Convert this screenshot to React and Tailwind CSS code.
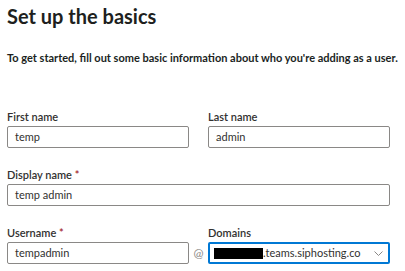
import React from "react";

const font = { fontFamily: 'Lato, "Noto Sans", sans-serif' };

const Field = ({ label, required, value, className = "" }) => (
  <div className={`flex flex-col ${className}`}>
    <label className="text-[11px] leading-[16px] font-semibold text-[#323130] mb-[1px]">
      {label}
      {required && <span className="text-[#a4262c]"> *</span>}
    </label>
    <div className="h-[22px] border border-[#8a8886] rounded-[2px] flex items-center px-[7px] text-[11px] text-[#323130]">
      {value}
    </div>
  </div>
);

export default function App() {
  return (
    <div className="w-[405px] h-[271px] bg-white overflow-hidden pl-[7px] pt-[1px]" style={font}>
      <h1 className="text-[20px] leading-[30px] font-bold text-[#201f1e]">Set up the basics</h1>

      <p className="mt-[19px] text-[11px] leading-[16px] font-bold whitespace-nowrap text-[#201f1e]">
        To get started, fill out some basic information about who you're adding as a user.
      </p>

      <div className="mt-[43px] flex gap-[19px] w-[383px]">
        <Field label="First name" value="temp" className="w-[182px]" />
        <Field label="Last name" value="admin" className="w-[182px]" />
      </div>

      <Field label="Display name" required value="temp admin" className="w-[383px] mt-[19px]" />

      <div className="mt-[19px] flex items-end w-[383px]">
        <Field label="Username" required value="tempadmin" className="w-[182px]" />
        <div className="w-[19px] h-[22px] flex items-center justify-center text-[12px] text-[#8a8886]">@</div>
        <div className="w-[182px] flex flex-col">
          <label className="text-[11px] leading-[16px] font-semibold text-[#323130] mb-[1px]">Domains</label>
          <div className="h-[22px] border-2 border-[#0078d4] rounded-[2px] flex items-center pl-[4px] pr-[5px] text-[11px] text-[#323130]">
            <span className="w-[49px] h-[11px] bg-black shrink-0" />
            <span>.teams.siphosting.co</span>
            <svg className="ml-auto" width="9" height="5" viewBox="0 0 9 5" fill="none">
              <path d="M0.5 0.5l4 4 4-4" stroke="#8a8886" strokeWidth="1" />
            </svg>
          </div>
        </div>
      </div>
    </div>
  );
}
